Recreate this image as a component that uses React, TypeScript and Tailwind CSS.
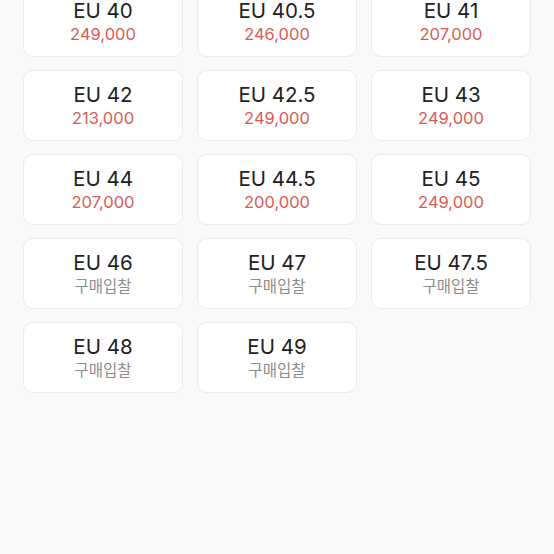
const sizes: { size: string; price?: string }[] = [
  { size: "EU 40", price: "249,000" },
  { size: "EU 40.5", price: "246,000" },
  { size: "EU 41", price: "207,000" },
  { size: "EU 42", price: "213,000" },
  { size: "EU 42.5", price: "249,000" },
  { size: "EU 43", price: "249,000" },
  { size: "EU 44", price: "207,000" },
  { size: "EU 44.5", price: "200,000" },
  { size: "EU 45", price: "249,000" },
  { size: "EU 46" },
  { size: "EU 47" },
  { size: "EU 47.5" },
  { size: "EU 48" },
  { size: "EU 49" },
];

export default function App() {
  return (
    <div
      className="h-[554px] w-[554px] overflow-hidden bg-[#f9f9f9]"
      style={{ fontFamily: 'Inter, "Noto Sans CJK KR", sans-serif' }}
    >
      <div className="-mt-[14px] grid grid-cols-3 gap-x-[14px] gap-y-[13px] px-[23px]">
        {sizes.map((s) => (
          <div
            key={s.size}
            className="flex h-[71px] flex-col items-center justify-center rounded-[10px] border border-[#ebebeb] bg-white pt-[1px]"
          >
            <span className="text-[20.5px] leading-[25px] text-[#222]">{s.size}</span>
            {s.price ? (
              <span className="text-[16.5px] leading-[23px] text-[#d85b55]">{s.price}</span>
            ) : (
              <span className="text-[15.5px] leading-[23px] text-[#8c8c8c]">구매입찰</span>
            )}
          </div>
        ))}
      </div>
    </div>
  );
}
